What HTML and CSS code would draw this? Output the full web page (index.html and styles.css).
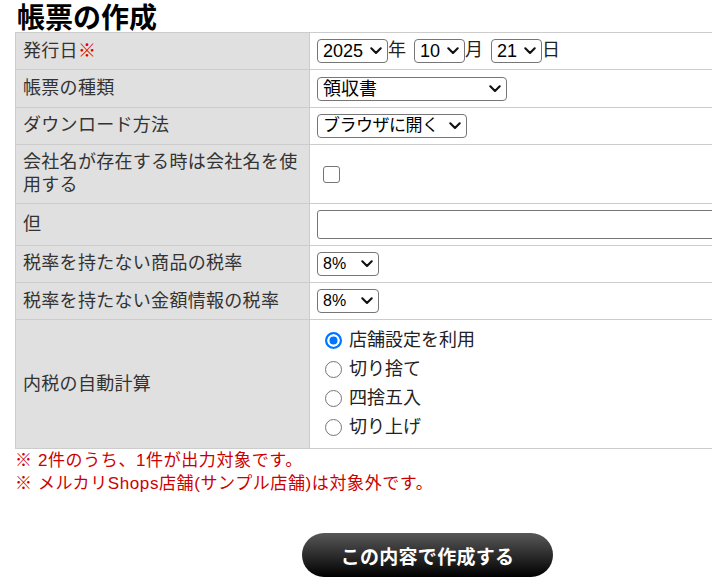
FILE: index.html
```html
<!DOCTYPE html>
<html lang="ja">
<head>
<meta charset="utf-8">
<title>帳票の作成</title>
<link rel="stylesheet" href="styles.css">
</head>
<body>
<div class="page">
  <h1 class="title">帳票の作成</h1>
  <table class="form-table">
    <colgroup><col class="col-label"><col class="col-value"></colgroup>
    <tbody>
      <tr>
        <th>発行日<span class="req">※</span></th>
        <td>
          <span class="select-wrap"><select class="sel sel-year"><option>2025</option><option>2024</option></select><svg class="chev" width="12" height="8" viewBox="0 0 12 8"><path d="M1.3 1.3 L6 6 L10.7 1.3"/></svg></span>年
          <span class="select-wrap gap"><select class="sel sel-md"><option>10</option><option>11</option></select><svg class="chev" width="12" height="8" viewBox="0 0 12 8"><path d="M1.3 1.3 L6 6 L10.7 1.3"/></svg></span>月
          <span class="select-wrap gap"><select class="sel sel-md"><option>21</option><option>22</option></select><svg class="chev" width="12" height="8" viewBox="0 0 12 8"><path d="M1.3 1.3 L6 6 L10.7 1.3"/></svg></span>日
        </td>
      </tr>
      <tr>
        <th>帳票の種類</th>
        <td><span class="select-wrap"><select class="sel sel-type"><option>領収書</option><option>納品書</option><option>請求書</option></select><svg class="chev" width="12" height="8" viewBox="0 0 12 8"><path d="M1.3 1.3 L6 6 L10.7 1.3"/></svg></span></td>
      </tr>
      <tr>
        <th>ダウンロード方法</th>
        <td><span class="select-wrap"><select class="sel sel-dl"><option>ブラウザに開く</option><option>ダウンロード</option></select><svg class="chev" width="12" height="8" viewBox="0 0 12 8"><path d="M1.3 1.3 L6 6 L10.7 1.3"/></svg></span></td>
      </tr>
      <tr>
        <th>会社名が存在する時は会社名を使用する</th>
        <td><input type="checkbox" class="check"></td>
      </tr>
      <tr>
        <th>但</th>
        <td><input type="text" class="text-input"></td>
      </tr>
      <tr>
        <th>税率を持たない商品の税率</th>
        <td><span class="select-wrap"><select class="sel sel-tax"><option>8%</option><option>10%</option></select><svg class="chev" width="12" height="8" viewBox="0 0 12 8"><path d="M1.3 1.3 L6 6 L10.7 1.3"/></svg></span></td>
      </tr>
      <tr>
        <th>税率を持たない金額情報の税率</th>
        <td><span class="select-wrap"><select class="sel sel-tax"><option>8%</option><option>10%</option></select><svg class="chev" width="12" height="8" viewBox="0 0 12 8"><path d="M1.3 1.3 L6 6 L10.7 1.3"/></svg></span></td>
      </tr>
      <tr>
        <th>内税の自動計算</th>
        <td>
          <div class="radios">
            <label class="radio-row"><input type="radio" name="calc" class="radio" checked><span>店舗設定を利用</span></label>
            <label class="radio-row"><input type="radio" name="calc" class="radio"><span>切り捨て</span></label>
            <label class="radio-row"><input type="radio" name="calc" class="radio"><span>四捨五入</span></label>
            <label class="radio-row"><input type="radio" name="calc" class="radio"><span>切り上げ</span></label>
          </div>
        </td>
      </tr>
    </tbody>
  </table>
  <div class="notes">
    <p>※ 2件のうち、1件が出力対象です。</p>
    <p>※ メルカリShops店舗(サンプル店舗)は対象外です。</p>
  </div>
  <div class="actions">
    <button type="button" class="submit">この内容で作成する</button>
  </div>
</div>
</body>
</html>
```

FILE: styles.css
```css
html, body {
  overflow-x: hidden;
}
body {
  margin: 0;
  background: #fff;
  color: #333;
  font-family: "Liberation Sans", "Noto Sans CJK JP", sans-serif;
}
.page {
  width: 825px;
  padding-left: 15px;
}
.title {
  margin: 5px 0 -1px 2px;
  font-size: 28px;
  line-height: 28px;
  font-weight: bold;
  color: #000;
}
.form-table {
  width: 825px;
  border-collapse: collapse;
  table-layout: fixed;
  font-size: 18px;
  line-height: 23px;
}
.col-label { width: 294px; }
.form-table th,
.form-table td {
  border: 1px solid #ccc;
  padding: 6px 7px;
  vertical-align: middle;
  text-align: left;
}
.form-table th {
  background: #e0e0e0;
  font-weight: normal;
  color: #333;
  letter-spacing: 0.3px;
}
.form-table td {
  background: #fff;
  color: #222;
}
.req { color: #e00000; }
.select-wrap {
  position: relative;
  display: inline-block;
  vertical-align: middle;
  line-height: 0;
}
.select-wrap.gap { margin-left: 3px; }
.sel {
  -webkit-appearance: none;
  appearance: none;
  box-sizing: border-box;
  font: inherit;
  font-size: 18px;
  line-height: 22px;
  height: 24px;
  margin: 0;
  padding: 0 20px 0 5px;
  color: #000;
  background: #fff;
  border: 1px solid #767676;
  border-radius: 4px;
}
.chev {
  position: absolute;
  right: 6px;
  top: 8px;
  pointer-events: none;
  fill: none;
  stroke: #111;
  stroke-width: 2.1;
  stroke-linecap: round;
  stroke-linejoin: round;
}
.sel-year { width: 71px; }
.sel-md { width: 51px; }
.sel-type { width: 190px; }
.sel-dl { width: 150px; font-size: 17px; letter-spacing: -0.5px; }
.sel-tax { width: 62px; font-size: 16px; }
.check {
  -webkit-appearance: none;
  appearance: none;
  box-sizing: border-box;
  width: 17px;
  height: 17px;
  margin: 0 0 0 6px;
  border: 1px solid #767676;
  border-radius: 3px;
  background: #fff;
  vertical-align: middle;
}
.text-input {
  width: 440px;
  height: 29px;
  box-sizing: border-box;
  margin: 0;
  font: inherit;
  border: 1px solid #767676;
  border-radius: 3px;
  vertical-align: middle;
}
.radios {
  display: flex;
  flex-direction: column;
}
.radio-row {
  display: flex;
  align-items: center;
  height: 29px;
  font-size: 18px;
  color: #222;
}
.radio {
  -webkit-appearance: none;
  appearance: none;
  box-sizing: border-box;
  width: 17px;
  height: 17px;
  margin: 0 7px 0 8px;
  border: 1px solid #767676;
  border-radius: 50%;
  background: #fff;
}
.radio:checked {
  border: 2px solid #0075ff;
  background: #0075ff;
  box-shadow: inset 0 0 0 2.5px #fff;
}
.notes {
  color: #cc0000;
  font-size: 17px;
  line-height: 23px;
  letter-spacing: 0.6px;
}
.notes p {
  margin: 0;
}
.actions {
  display: flex;
  justify-content: center;
  margin-top: 38px;
}
.submit {
  width: 251px;
  height: 44px;
  border: none;
  border-radius: 22px;
  background: linear-gradient(#585858, #000);
  color: #fff;
  font-family: "Noto Sans CJK JP", sans-serif;
  font-size: 19px;
  font-weight: bold;
  letter-spacing: 0.3px;
}
```
